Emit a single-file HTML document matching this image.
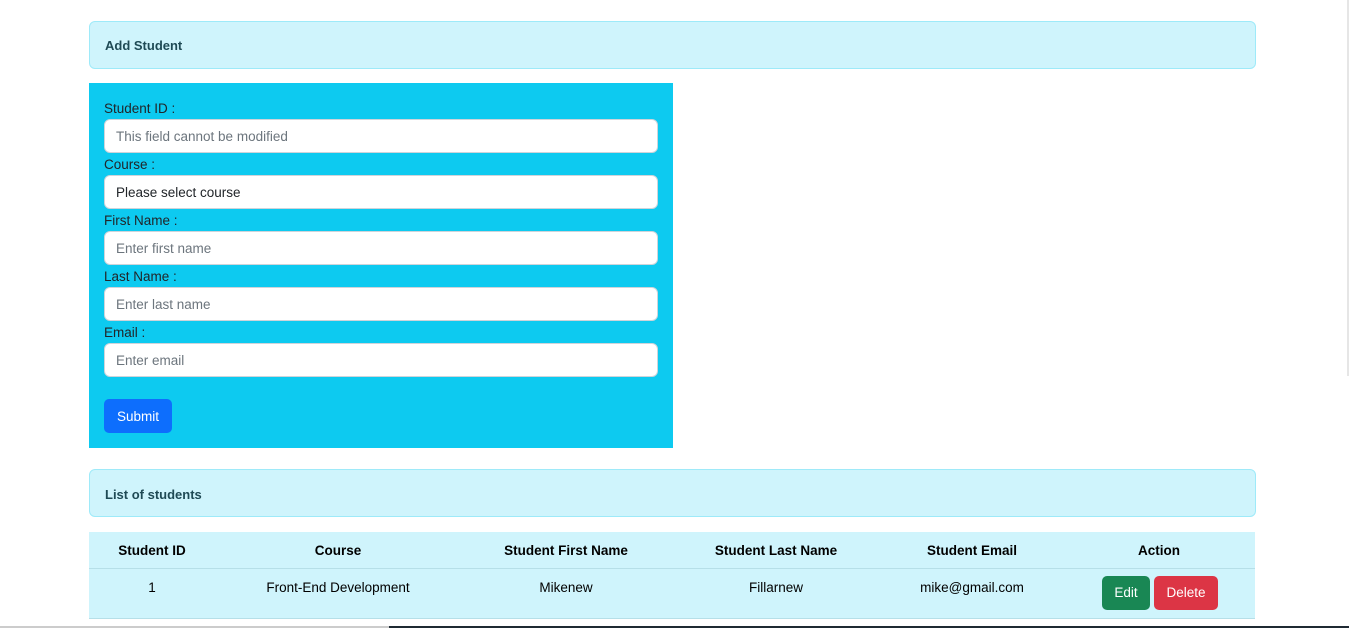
<!DOCTYPE html>
<html><head><meta charset="utf-8"><style>
*{box-sizing:border-box}
body{margin:0;width:1349px;height:628px;overflow:hidden;background:#fff;font-family:"Liberation Sans",sans-serif;font-size:14px;color:#212529;position:relative}
.alert{position:absolute;left:89px;width:1167px;height:48px;background:#cff4fc;border:1px solid #9eeaf9;border-radius:6px;color:#1f4a55;font-weight:bold;font-size:13px;padding:16px 15px}
.form{position:absolute;left:89px;top:83px;width:584px;height:365px;background:#0dcaf0}
.lbl{position:absolute;left:15px;font-size:13.5px;color:#212529}
.inp{position:absolute;left:15px;width:554px;height:34px;background:#fff;border:1px solid #ced4da;border-radius:6px;padding:9px 11px 8px;font-size:13.5px;color:#6c757d}
.btn{position:absolute;border-radius:5px;color:#fff;font-size:13.5px;text-align:center}
table{position:absolute;left:89px;top:532px;width:1166px;border-collapse:collapse;background:#cff4fc;table-layout:fixed}
th{height:36px;font-size:13.5px;color:#000;border-bottom:1px solid #b6dfe8;padding-top:2px}
td{height:50px;text-align:center;font-size:13.5px;color:#000;border-bottom:1px solid #b6dfe8}
</style></head><body>
<div class="alert" style="top:21px">Add Student</div>
<div class="form">
<div class="lbl" style="top:18px">Student ID :</div>
<div class="inp" style="top:36px">This field cannot be modified</div>
<div class="lbl" style="top:74px">Course :</div>
<div class="inp" style="top:92px;color:#212529">Please select course</div>
<div class="lbl" style="top:130px">First Name :</div>
<div class="inp" style="top:148px">Enter first name</div>
<div class="lbl" style="top:186px">Last Name :</div>
<div class="inp" style="top:204px">Enter last name</div>
<div class="lbl" style="top:242px">Email :</div>
<div class="inp" style="top:260px">Enter email</div>
<div class="btn" style="left:15px;top:316px;width:68px;height:34px;background:#0d6efd;line-height:35px">Submit</div>
</div>
<div class="alert" style="top:469px;padding-top:17px">List of students</div>
<table>
<colgroup><col style="width:126px"><col style="width:246px"><col style="width:210px"><col style="width:210px"><col style="width:182px"><col style="width:192px"></colgroup>
<tr><th>Student ID</th><th>Course</th><th>Student First Name</th><th>Student Last Name</th><th>Student Email</th><th>Action</th></tr>
<tr><td style="vertical-align:top;padding-top:11px">1</td><td style="vertical-align:top;padding-top:11px">Front-End Development</td><td style="vertical-align:top;padding-top:11px">Mikenew</td><td style="vertical-align:top;padding-top:11px">Fillarnew</td><td style="vertical-align:top;padding-top:11px">mike@gmail.com</td><td></td></tr>
</table>
<div class="btn" style="left:1102px;top:576px;width:48px;height:34px;line-height:34px;background:#198754">Edit</div>
<div class="btn" style="left:1154px;top:576px;width:64px;height:34px;line-height:34px;background:#dc3545">Delete</div>
<div style="position:absolute;left:0;top:626px;width:389px;height:2px;background:#ccc"></div>
<div style="position:absolute;left:389px;top:626px;width:960px;height:2px;background:#1f2a33"></div>
<div style="position:absolute;left:1347px;top:0;width:2px;height:376px;background:#e6e6e6"></div>
</body></html>
